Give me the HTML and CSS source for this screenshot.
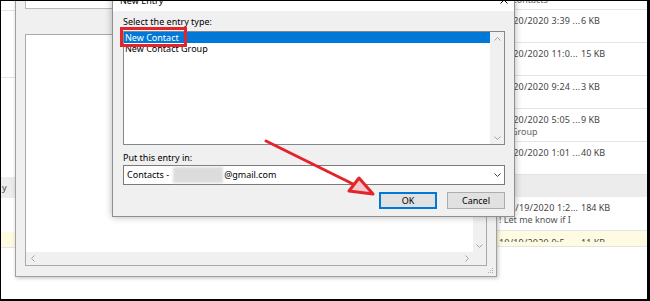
FILE: index.html
```html
<!DOCTYPE html>
<html lang="en">
<head>
    <meta charset="UTF-8">
    <meta name="viewport" content="width=device-width, initial-scale=1.0">
    <title>New Entry</title>
    <link rel="stylesheet" href="styles.css">
</head>
<body>
    <div class="screen">
        <!-- Outlook behind the windows -->
        <div class="desk">
            <div class="folder-col">
                <div class="f-row f-row-top"></div>
                <div class="f-row f-row-mid"></div>
                <div class="f-space f-space-a"></div>
                <div class="f-band">y</div>
                <div class="f-space f-space-b"></div>
                <div class="f-row f-row-flag"></div>
            </div>
            <div class="under-col"></div>
            <div class="mail-list">
                <div class="mail-row mail-row-first">
                    <div class="mail-line"><span class="mail-date">10/20/2020 4:12 ...</span><span class="mail-size">8 KB</span></div>
                    <div class="mail-line"><span class="mail-preview">Contacts</span></div>
                </div>
                <div class="mail-row">
                    <div class="mail-line"><span class="mail-date">10/20/2020 3:39 ...</span><span class="mail-size">6 KB</span></div>
                </div>
                <div class="mail-row">
                    <div class="mail-line"><span class="mail-date">10/20/2020 11:0...</span><span class="mail-size">15 KB</span></div>
                </div>
                <div class="mail-row">
                    <div class="mail-line"><span class="mail-date">10/20/2020 9:24 ...</span><span class="mail-size">3 KB</span></div>
                </div>
                <div class="mail-row">
                    <div class="mail-line"><span class="mail-date">10/20/2020 5:05 ...</span><span class="mail-size">9 KB</span></div>
                    <div class="mail-line"><span class="mail-preview">Group</span></div>
                </div>
                <div class="mail-row">
                    <div class="mail-line"><span class="mail-date">10/20/2020 1:01 ...</span><span class="mail-size">40 KB</span></div>
                </div>
                <div class="mail-group"></div>
                <div class="mail-row mail-row-tall">
                    <div class="mail-line"><span class="mail-date mail-date-short">7/19/2020 1:2...</span><span class="mail-size">184 KB</span></div>
                    <div class="mail-line"><span class="mail-text">! Let me know if I</span></div>
                </div>
                <div class="mail-row mail-row-flag">
                    <div class="mail-line mail-line-cut"><span class="mail-date">10/19/2020 9:5...</span><span class="mail-size">11 KB</span></div>
                </div>
            </div>
        </div>

        <!-- Contact window behind the dialog -->
        <div class="win back-win">
            <div class="back-field"></div>
            <div class="back-panel">
                <div class="back-body">
                    <div class="back-blank"></div>
                    <div class="vscroll">
                        <div class="scroll-fill"></div>
                        <div class="scroll-btn">
                            <svg width="7" height="4" viewBox="0 0 7 4"><path d="M0.5 0.5 L3.5 3.5 L6.5 0.5" fill="none" stroke="#a6a6a6"/></svg>
                        </div>
                    </div>
                </div>
                <div class="hscroll">
                    <div class="scroll-btn">
                        <svg width="4" height="7" viewBox="0 0 4 7"><path d="M3.5 0.5 L0.5 3.5 L3.5 6.5" fill="none" stroke="#a6a6a6"/></svg>
                    </div>
                    <div class="scroll-fill"></div>
                    <div class="scroll-btn">
                        <svg width="4" height="7" viewBox="0 0 4 7"><path d="M0.5 0.5 L3.5 3.5 L0.5 6.5" fill="none" stroke="#a6a6a6"/></svg>
                    </div>
                    <div class="scroll-corner"></div>
                </div>
            </div>
            <svg class="grip" width="6" height="6" viewBox="0 0 6 6">
                <rect x="4" y="0" width="1" height="1" fill="#b0b0b0"/>
                <rect x="2" y="2" width="1" height="1" fill="#b0b0b0"/>
                <rect x="4" y="2" width="1" height="1" fill="#b0b0b0"/>
                <rect x="0" y="4" width="1" height="1" fill="#b0b0b0"/>
                <rect x="2" y="4" width="1" height="1" fill="#b0b0b0"/>
                <rect x="4" y="4" width="1" height="1" fill="#b0b0b0"/>
            </svg>
        </div>

        <!-- New Entry dialog -->
        <div class="win dialog">
            <div class="dialog-title">
                <span class="dialog-caption">New Entry</span>
                <svg class="dialog-close" width="8" height="8" viewBox="0 0 8 8"><path d="M0.5 0.5 L7.5 7.5 M7.5 0.5 L0.5 7.5" stroke="#111" stroke-width="1"/></svg>
            </div>
            <div class="dialog-body">
                <div class="field-label">Select the entry type:</div>
                <div class="listbox">
                    <div class="list-items">
                        <div class="list-item selected">New Contact</div>
                        <div class="list-item">New Contact Group</div>
                    </div>
                    <div class="list-scroll">
                        <div class="scroll-btn">
                            <svg width="7" height="4" viewBox="0 0 7 4"><path d="M0.5 3.5 L3.5 0.5 L6.5 3.5" fill="none" stroke="#a6a6a6"/></svg>
                        </div>
                        <div class="scroll-fill"></div>
                        <div class="scroll-btn">
                            <svg width="7" height="4" viewBox="0 0 7 4"><path d="M0.5 0.5 L3.5 3.5 L6.5 0.5" fill="none" stroke="#a6a6a6"/></svg>
                        </div>
                    </div>
                </div>
                <div class="field-label field-label-second">Put this entry in:</div>
                <div class="combo">
                    <span class="combo-text">Contacts -</span>
                    <span class="combo-blur"></span>
                    <span class="combo-text">@gmail.com</span>
                    <span class="combo-fill"></span>
                    <span class="combo-arrow">
                        <svg width="7" height="4" viewBox="0 0 7 4"><path d="M0.5 0.5 L3.5 3.5 L6.5 0.5" fill="none" stroke="#444"/></svg>
                    </span>
                </div>
                <div class="dialog-buttons">
                    <div class="btn btn-default">OK</div>
                    <div class="btn">Cancel</div>
                </div>
            </div>
        </div>

        <!-- Annotations -->
        <div class="callout-box"></div>
        <svg class="callout-arrow" width="646" height="298" viewBox="0 0 646 298">
            <line x1="265" y1="140" x2="354" y2="184" stroke="#e3242b" stroke-width="3" stroke-linecap="round"/>
            <polygon points="348,190 358,177 372,193" fill="#f3c9c9" stroke="#e3242b" stroke-width="3" stroke-linejoin="round"/>
        </svg>
    </div>
</body>
</html>
```

FILE: styles.css
```css
/* Basic reset */
* {
    margin: 0;
    padding: 0;
    box-sizing: border-box;
}

body {
    width: 650px;
    height: 301px;
    overflow: hidden;
    font-family: "Noto Sans", "Open Sans", sans-serif;
    font-size: 9px;
    color: #000;
}

svg {
    display: block;
}

/* Screen frame */
.screen {
    position: relative;
    width: 650px;
    height: 301px;
    overflow: hidden;
    background-color: #fff;
    border-top: 1px solid #000;
    border-left: 1px solid #000;
    border-right: 3px solid #000;
    border-bottom: 2px solid #000;
}

.desk {
    display: flex;
    height: 100%;
}

/* Folder strip on the left */
.folder-col {
    width: 14px;
    display: flex;
    flex-direction: column;
}

.f-row {
    border-bottom: 1px solid #e4e4e4;
}

.f-row-top {
    height: 10px;
}

.f-row-mid {
    height: 67px;
}

.f-space-a {
    height: 99px;
}

.f-band {
    height: 21px;
    line-height: 21px;
    padding-left: 1px;
    background-color: #ececec;
    color: #444;
}

.f-space-b {
    height: 34px;
}

.f-row-flag {
    height: 16px;
    background-color: #fffbe3;
}

.under-col {
    width: 482px;
}

/* Mail list on the right */
.mail-list {
    flex: 1;
    overflow: hidden;
    color: #444;
}

.mail-row {
    height: 33px;
    padding: 5px 0 0 2px;
    border-bottom: 1px solid #e4e4e4;
}

.mail-row-first {
    margin-top: -24px;
}

.mail-row-tall {
    height: 34px;
}

.mail-row-flag {
    height: 16px;
    padding-top: 6px;
    background-color: #fffbe3;
}

.mail-line {
    display: flex;
    line-height: 12px;
    white-space: nowrap;
}

.mail-line-cut {
    height: 5px;
    overflow: hidden;
}

.mail-date {
    width: 82px;
    overflow: hidden;
    letter-spacing: 0.2px;
}

.mail-date-short {
    padding-left: 11px;
}

.mail-preview {
    padding-left: 12px;
    color: #666;
}

.mail-text {
    color: #555;
}

.mail-group {
    height: 22px;
    background-color: #ececec;
}

/* Windows */
.win {
    position: absolute;
    display: flex;
    flex-direction: column;
    background-color: #f0f0f0;
}

.back-win {
    left: 14px;
    top: -21px;
    width: 482px;
    height: 297px;
    padding: 0 9px 10px 9px;
    border: 1px solid #a0a0a0;
    box-shadow: 1px 1px 4px rgba(0, 0, 0, 0.25);
}

.back-field {
    height: 28px;
    background-color: #fff;
    border: 1px solid #b9b9b9;
    border-top: none;
}

.back-panel {
    flex: 1;
    margin-top: 25px;
    display: flex;
    flex-direction: column;
    background-color: #fff;
    border: 1px solid #a9a9a9;
}

.back-body {
    flex: 1;
    display: flex;
}

.back-blank {
    flex: 1;
}

.vscroll {
    width: 13px;
    display: flex;
    flex-direction: column;
    background-color: #f0f0f0;
}

.hscroll {
    height: 13px;
    display: flex;
    background-color: #f0f0f0;
}

.scroll-btn {
    width: 13px;
    height: 13px;
    display: flex;
    align-items: center;
    justify-content: center;
}

.scroll-fill {
    flex: 1;
}

.scroll-corner {
    width: 13px;
    background-color: #f0f0f0;
}

.grip {
    position: absolute;
    right: 2px;
    bottom: 2px;
}

/* New Entry dialog */
.dialog {
    left: 111px;
    top: -21px;
    width: 403px;
    height: 237px;
    border: 1px solid #8f8f8f;
    box-shadow: 0 0 7px rgba(0, 0, 0, 0.3);
}

.dialog-title {
    height: 30px;
    display: flex;
    justify-content: space-between;
    padding: 14px 6px 0 7px;
    background-color: #fff;
}

.dialog-caption {
    line-height: 12px;
}

.dialog-close {
    margin-top: 1px;
}

.dialog-body {
    flex: 1;
    display: flex;
    flex-direction: column;
    padding: 5px 9px 0 10px;
}

.field-label {
    line-height: 12px;
    margin-bottom: 3px;
}

.field-label-second {
    margin-top: 7px;
    margin-bottom: 1px;
}

.listbox {
    height: 114px;
    display: flex;
    background-color: #fff;
    border: 1px solid #828790;
}

.list-items {
    flex: 1;
}

.list-item {
    height: 11px;
    line-height: 11px;
    padding-left: 1px;
    white-space: nowrap;
}

.list-item.selected {
    background-color: #0078d7;
    color: #fff;
}

.list-scroll {
    width: 14px;
    display: flex;
    flex-direction: column;
    background-color: #f0f0f0;
}

.list-scroll .scroll-btn {
    width: 14px;
}

.combo {
    height: 20px;
    display: flex;
    align-items: center;
    padding: 1px 0 1px 3px;
    background-color: #fff;
    border: 1px solid #7a7a7a;
}

.combo-text {
    white-space: pre;
    line-height: 12px;
}

.combo-blur {
    width: 50px;
    height: 100%;
    margin: 0 1px 0 4px;
    background-color: #dcdcdc;
    filter: blur(1px);
}

.combo-fill {
    flex: 1;
}

.combo-arrow {
    width: 14px;
    display: flex;
    justify-content: center;
}

.dialog-buttons {
    display: flex;
    justify-content: flex-end;
    gap: 10px;
    margin-top: 7px;
}

.btn {
    width: 58px;
    height: 17px;
    line-height: 15px;
    text-align: center;
    background-color: #e1e1e1;
    border: 1px solid #adadad;
}

.btn-default {
    line-height: 13px;
    border: 2px solid #0078d7;
}

/* Red annotations */
.callout-box {
    position: absolute;
    left: 119px;
    top: 26px;
    width: 67px;
    height: 20px;
    border: 3px solid #e3242b;
}

.callout-arrow {
    position: absolute;
    left: 0;
    top: 0;
    pointer-events: none;
}
```
